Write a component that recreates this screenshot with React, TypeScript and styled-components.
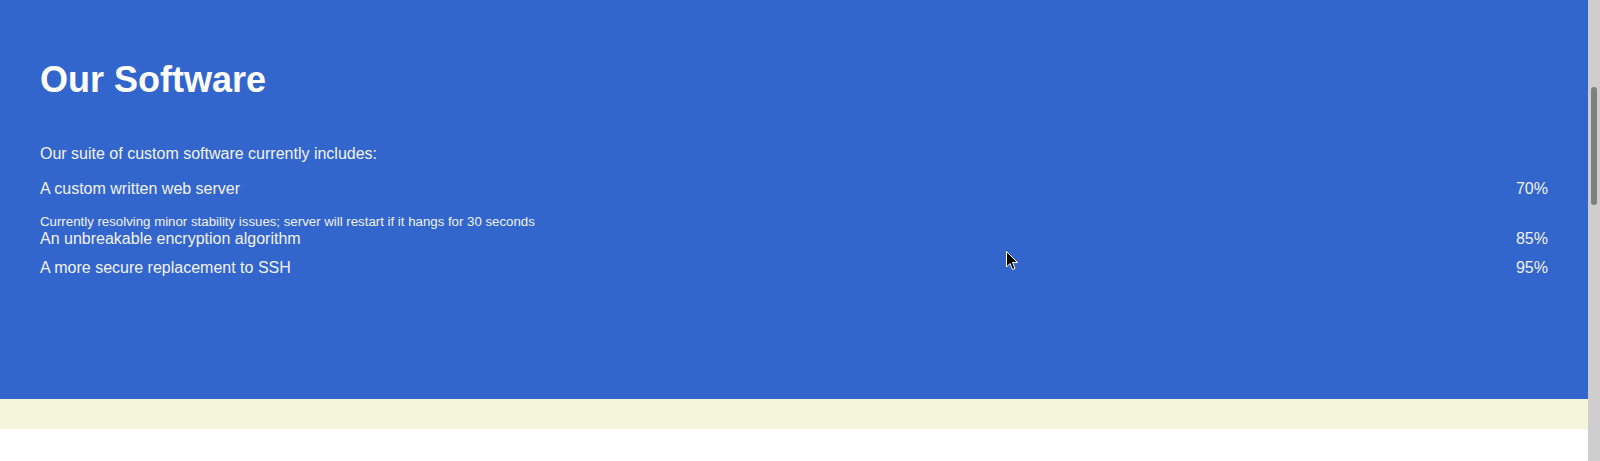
import React from "react";
import styled, { createGlobalStyle } from "styled-components";

const Global = createGlobalStyle`
  html, body { margin: 0; padding: 0; overflow: hidden; background: #ffffff; }
  body { font-family: "Liberation Sans", Arial, sans-serif; }
`;

const Page = styled.div`
  width: 1588px;
  height: 461px;
  display: flex;
  flex-direction: column;
`;

const Section = styled.section`
  background: #3366cc;
  color: #f2f2f2;
  padding: 59px 40px 0 40px;
  height: 399px;
  box-sizing: border-box;
`;

const Title = styled.h1`
  margin: 0;
  font-size: 36px;
  line-height: 41px;
  font-weight: 700;
  color: #ffffff;
`;

const Intro = styled.p`
  margin: 45px 0 17px 0;
  font-size: 16px;
  line-height: 18.4px;
`;

const List = styled.div`
  display: flex;
  flex-direction: column;
`;

const Row = styled.div`
  display: flex;
  justify-content: space-between;
  font-size: 16px;
  line-height: 18.4px;
  padding-bottom: 11px;
`;

const Note = styled.div`
  margin-top: 4px;
  font-size: 13.25px;
  line-height: 16px;
`;

const Band = styled.div`
  height: 30px;
  background: #f5f5dc;
`;

const Blank = styled.div`
  flex: 1;
  background: #ffffff;
`;

const ScrollTrack = styled.div`
  position: fixed;
  top: 0;
  right: 0;
  width: 12px;
  height: 461px;
  background: #cecece;
`;

const ScrollThumb = styled.div`
  position: absolute;
  left: 3px;
  top: 87px;
  width: 6px;
  height: 118px;
  border-radius: 3px;
  background: #7f8180;
`;

const Cursor = styled.svg`
  position: fixed;
  left: 1006px;
  top: 251px;
`;

const items = [
  { name: "A custom written web server", pct: "70%", note: "Currently resolving minor stability issues; server will restart if it hangs for 30 seconds" },
  { name: "An unbreakable encryption algorithm", pct: "85%" },
  { name: "A more secure replacement to SSH", pct: "95%" },
];

export default function App() {
  return (
    <>
      <Global />
      <Page>
        <Section>
          <Title>Our Software</Title>
          <Intro>Our suite of custom software currently includes:</Intro>
          <List>
            {items.map((it) => (
              <React.Fragment key={it.name}>
                <Row>
                  <span>{it.name}</span>
                  <span>{it.pct}</span>
                </Row>
                {it.note && <Note>{it.note}</Note>}
              </React.Fragment>
            ))}
          </List>
        </Section>
        <Band />
        <Blank />
      </Page>
      <ScrollTrack>
        <ScrollThumb />
      </ScrollTrack>
      <Cursor width="13" height="20" viewBox="0 0 13 20">
        <path d="M0.5 0.5 L0.5 16 L4 12.5 L6.5 18.5 L9 17.5 L6.5 11.5 L11.5 11.5 Z" fill="#000" stroke="#fff" strokeWidth="1" />
      </Cursor>
    </>
  );
}
